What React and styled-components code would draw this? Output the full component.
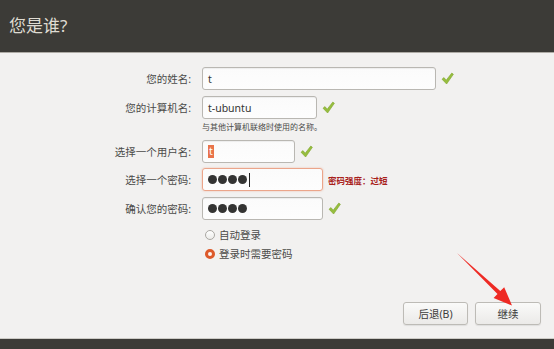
import React from "react";
import styled, { createGlobalStyle } from "styled-components";

const Global = createGlobalStyle`
  html, body { margin: 0; padding: 0; background: #f2f1f0; }
  body { font-family: "Noto Sans", "Noto Sans CJK SC", sans-serif; }
`;

const Window = styled.div`
  position: relative;
  width: 554px;
  height: 349px;
  display: flex;
  flex-direction: column;
  background: #f2f1f0;
  overflow: hidden;
`;

const Header = styled.header`
  box-sizing: border-box;
  height: 53px;
  padding: 0 0 3px 9px;
  display: flex;
  align-items: center;
  background: #3c3b37;
  border-bottom: 1px solid #aeaba5;
  color: #dfdbd2;
  font-size: 17px;
`;

const Main = styled.main`
  flex: 1;
  display: flex;
  flex-direction: column;
  padding-top: 14px;
`;

const Row = styled.div`
  display: flex;
  align-items: center;
  height: 23px;
  margin-bottom: ${(p) => p.$after || 6}px;
`;

const Label = styled.label`
  width: 191px;
  margin-right: 11px;
  text-align: right;
  font-size: 10.5px;
  color: #4a4a48;
`;

const Input = styled.div`
  box-sizing: border-box;
  width: ${(p) => p.$w}px;
  height: 23px;
  padding-left: 5px;
  display: flex;
  align-items: center;
  border: 1px solid ${(p) => (p.$focus ? "#eba58a" : "#b9b7b2")};
  border-radius: 3px;
  background: linear-gradient(#fbfbfb, #fdfdfd);
  box-shadow: ${(p) =>
    p.$focus ? "0 0 2px rgba(233, 84, 32, 0.35)" : "inset 0 1px 1px rgba(0,0,0,0.06)"};
  font-size: 10.5px;
  color: #333;
`;

const Selected = styled.span`
  background: #e9744a;
  color: #fff;
  padding: 0 1px;
  line-height: 13px;
`;

const Dot = styled.span`
  display: inline-block;
  width: 9px;
  height: 9px;
  margin-right: 1px;
  border-radius: 50%;
  background: #343433;
`;

const Caret = styled.span`
  display: inline-block;
  width: 1px;
  height: 14px;
  margin-left: 1px;
  background: #222;
`;

const Side = styled.div`
  margin-left: 5px;
  display: flex;
  align-items: center;
`;

const Strength = styled.span`
  font-size: 8.5px;
  font-weight: bold;
  color: #a8201a;
`;

const Hint = styled.div`
  margin: -4px 0 7px 202px;
  height: 12px;
  line-height: 12px;
  font-size: 8px;
  color: #4a4a48;
`;

const Radio = styled.div`
  display: flex;
  align-items: center;
  height: 19px;
  margin-left: 205px;
  font-size: 10.5px;
  color: #4a4a48;
`;

const RadioMark = styled.span`
  box-sizing: border-box;
  width: 10px;
  height: 10px;
  margin-right: 4px;
  border-radius: 50%;
  border: ${(p) => (p.$on ? "3px solid #dd5a2b" : "1px solid #aaa8a3")};
  background: ${(p) => (p.$on ? "#fdf4ef" : "linear-gradient(#fff, #ecebe9)")};
`;

const Buttons = styled.div`
  margin-top: auto;
  display: flex;
  justify-content: flex-end;
  gap: 7px;
  padding: 0 13px 13px 0;
`;

const Button = styled.button`
  box-sizing: border-box;
  width: ${(p) => p.$w}px;
  height: 23px;
  border: 1px solid #bdbbb6;
  border-radius: 3px;
  background: linear-gradient(#fafaf9, #ebeae8);
  box-shadow: 0 1px 1px rgba(0,0,0,0.08);
  font-family: inherit;
  font-size: 10.5px;
  color: #3c3c3c;
  padding: 0;
`;

const Footer = styled.footer`
  height: 10px;
  background: #3c3b37;
  border-top: 1px solid #cdcbc6;
`;

const Arrow = styled.svg`
  position: absolute;
  left: 0;
  top: 0;
  pointer-events: none;
`;

const Check = () => (
  <svg width="13" height="13" viewBox="0 0 13 13">
    <path
      d="M1 7.2 L3 5.6 L5.2 8.2 L10.8 1 L12.4 2.3 L5.6 12 Z"
      fill="#97be3e"
      stroke="#7ea52c"
      strokeWidth="0.6"
      strokeLinejoin="round"
    />
  </svg>
);

const Dots = () => (
  <>
    <Dot />
    <Dot />
    <Dot />
    <Dot />
  </>
);

export default function App() {
  return (
    <Window>
      <Global />
      <Header>您是谁?</Header>
      <Main>
        <Row>
          <Label>您的姓名:</Label>
          <Input $w={234}>t</Input>
          <Side><Check /></Side>
        </Row>
        <Row>
          <Label>您的计算机名:</Label>
          <Input $w={115}>t-ubuntu</Input>
          <Side><Check /></Side>
        </Row>
        <Hint>与其他计算机联络时使用的名称。</Hint>
        <Row $after={5}>
          <Label>选择一个用户名:</Label>
          <Input $w={93}><Selected>t</Selected></Input>
          <Side><Check /></Side>
        </Row>
        <Row $after={6}>
          <Label>选择一个密码:</Label>
          <Input $w={121} $focus><Dots /><Caret /></Input>
          <Side><Strength>密码强度：过短</Strength></Side>
        </Row>
        <Row $after={5}>
          <Label>确认您的密码:</Label>
          <Input $w={121}><Dots /></Input>
          <Side><Check /></Side>
        </Row>
        <Radio><RadioMark />自动登录</Radio>
        <Radio><RadioMark $on />登录时需要密码</Radio>
        <Buttons>
          <Button $w={65}>后退(B)</Button>
          <Button $w={66}>继续</Button>
        </Buttons>
      </Main>
      <Footer />
      <Arrow width="554" height="349" viewBox="0 0 554 349">
        <polygon
          points="457,253 500.3,291.1 504.2,287.2 512,305.5 493.6,298.1 497.5,294.1"
          fill="#ee2a24"
        />
      </Arrow>
    </Window>
  );
}
